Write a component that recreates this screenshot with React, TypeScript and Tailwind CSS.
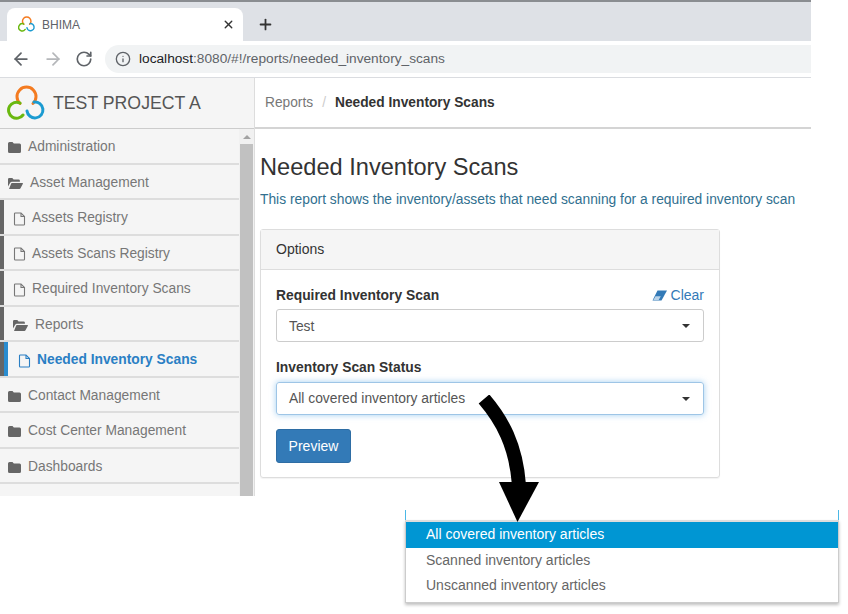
import React from 'react';
import { ArrowLeft, ArrowRight, Info, Plus, RotateCw, X } from 'lucide-react';

const FONT = "font-['Liberation_Sans',Arial,sans-serif]";

const Logo: React.FC<{ width: number; stroke: number }> = ({ width, stroke }) => (
  <svg width={width} viewBox="0 0 38 36" fill="none" className="shrink-0">
    <path d="M13 18.500 A9.500 9.500 0 1 1 26 18.500" stroke="#f47b20" strokeWidth={stroke} strokeLinecap="round" />
    <path d="M13 18 A8 8 0 1 0 16 30" stroke="#6ab80f" strokeWidth={stroke} strokeLinecap="round" />
    <path d="M20 26 A8 8 0 1 0 27 17" stroke="#1b9bd1" strokeWidth={stroke} strokeLinecap="round" />
  </svg>
);

const FolderClosed = () => (
  <svg width="13" height="11" viewBox="0 0 13 11" className="shrink-0">
    <path d="M1.500 0h3l1.300 1.600h5.700a1.500 1.500 0 0 1 1.500 1.500v6.400a1.500 1.500 0 0 1-1.500 1.500h-10A1.500 1.500 0 0 1 0 9.500v-8A1.500 1.500 0 0 1 1.500 0z" fill="#666" />
  </svg>
);

const FolderOpen = () => (
  <svg width="15" height="11" viewBox="0 0 15 11" className="shrink-0">
    <path d="M1.300 0h3l1.300 1.500h5a1.300 1.300 0 0 1 1.300 1.300v1H4a2 2 0 0 0-1.800 1L0 8.600V1.300A1.300 1.300 0 0 1 1.300 0z" fill="#666" />
    <path d="M3.800 5h10.700c.4 0 .6.400.4.700l-2.400 4.600a1.200 1.200 0 0 1-1 .7H1l2.200-5.500c.1-.300.300-.500.600-.500z" fill="#666" />
  </svg>
);

const PageIcon = () => (
  <svg width="13" height="14" viewBox="0 0 13 14" fill="none" stroke="currentColor" strokeWidth="1.100" className="shrink-0">
    <path d="M1.500 1.800c0-.5.300-.800.800-.800h5.700l3.500 3.500v7.700c0 .5-.3.800-.8.800H2.300c-.5 0-.8-.3-.8-.8z" />
    <path d="M8 1v3.500h3.500" />
  </svg>
);

const Eraser = () => (
  <svg width="15" height="11" viewBox="0 0 15 11" className="shrink-0">
    <path d="M5.500 0.500H15L9.500 10.500H0.500z" fill="#337ab7" />
    <path d="M1.300 10L3.500 6.200h5.300L6.700 10z" fill="#b9d3e9" />
  </svg>
);

const Caret = () => <span className="h-0 w-0 border-x-4 border-t-4 border-x-transparent border-t-[#333]" />;

const NavRow: React.FC<{ label: string; kind: 'closed' | 'open' }> = ({ label, kind }) => (
  <div className="flex h-[35.5px] items-center gap-[7px] border-b-2 border-[#ddd] pt-[4px] pl-[8px] text-[13.8px] text-[#777]">
    {kind === 'closed' ? <FolderClosed /> : <FolderOpen />}
    <span>{label}</span>
  </div>
);

const ChildRow: React.FC<{ label: string; active?: boolean; folder?: boolean }> = ({ label, active, folder }) => (
  <div className="flex h-[35.5px] border-b-2 border-[#ddd] text-[13.8px] text-[#777]">
    <span className="w-[4px] shrink-0 bg-[#666]" />
    {active && <span className="w-[4px] shrink-0 bg-[#2a8ccf]" />}
    <div
      className={`flex items-center pt-[4px] ${
        active ? 'gap-[6px] pl-[10px] font-bold text-[#2a7fc4]' : folder ? 'gap-[7px] pl-[9px]' : 'gap-[6px] pl-[9px]'
      }`}
    >
      {folder ? <FolderOpen /> : <PageIcon />}
      <span>{label}</span>
    </div>
  </div>
);

const Sidebar = () => (
  <aside className="flex h-[418px] w-[255px] shrink-0 flex-col border-r border-[#ddd] bg-[#f5f5f5]">
    <div className="flex h-[51px] shrink-0 items-center gap-[8px] border-b border-[#ccc] pl-[7px]">
      <Logo width={38} stroke={3} />
      <span className="text-[17.7px] text-[#555]">TEST PROJECT A</span>
    </div>
    <div className="flex min-h-0 flex-1">
      <nav className="w-[239px] overflow-hidden">
        <NavRow label="Administration" kind="closed" />
        <NavRow label="Asset Management" kind="open" />
        <ChildRow label="Assets Registry" />
        <ChildRow label="Assets Scans Registry" />
        <ChildRow label="Required Inventory Scans" />
        <ChildRow label="Reports" folder />
        <ChildRow label="Needed Inventory Scans" active />
        <NavRow label="Contact Management" kind="closed" />
        <NavRow label="Cost Center Management" kind="closed" />
        <NavRow label="Dashboards" kind="closed" />
      </nav>
      <div className="flex w-[15px] flex-col items-center bg-[#f1f1f1]">
        <span className="mt-[6px] mb-[5px] h-0 w-0 border-x-[4px] border-b-[4px] border-x-transparent border-b-[#a3a3a3]" />
        <span className="w-[13px] flex-1 bg-[#c1c1c1]" />
      </div>
    </div>
  </aside>
);

const SelectBox: React.FC<{ value: string; focused?: boolean }> = ({ value, focused }) => (
  <div
    className={`flex h-[33px] items-center justify-between rounded-[3px] border pr-[13px] pl-[12px] text-[13.85px] text-[#555] ${
      focused ? 'border-[#9ec5e6] shadow-[0_0_6px_rgba(102,175,233,0.6)]' : 'border-[#ccc] pt-[1px]'
    }`}
  >
    <span>{value}</span>
    <Caret />
  </div>
);

const Content = () => (
  <main className="min-w-0 flex-1 bg-white">
    <div className="flex h-[51px] items-center gap-[9px] border-b-2 border-[#d4d4d4] pt-[2px] pl-[10px] text-[13.75px]">
      <span className="text-[#777]">Reports</span>
      <span className="text-[#ccc]">/</span>
      <span className="font-bold text-[#333]">Needed Inventory Scans</span>
    </div>
    <div className="pl-[5px]">
      <h1 className="mt-[23px] text-[23.6px] leading-[30px] font-normal text-[#333]">Needed Inventory Scans</h1>
      <p className="mt-[7px] text-[13.82px] leading-[20px] text-[#31708f]">
        This report shows the inventory/assets that need scanning for a required inventory scan
      </p>
      <section className="mt-[20px] w-[460px] rounded-[3px] border border-[#ddd] shadow-[0_1px_1px_rgba(0,0,0,0.05)]">
        <div className="flex h-[40px] items-center border-b border-[#ddd] bg-[#f5f5f5] pl-[15px] text-[14px] text-[#333]">
          Options
        </div>
        <div className="px-[15px] pt-[15px] pb-[14px]">
          <div className="flex h-[20px] items-center justify-between text-[14px]">
            <label className="text-[13.85px] font-bold text-[#333]">Required Inventory Scan</label>
            <span className="flex items-center gap-[4px] text-[#337ab7]">
              <Eraser />
              Clear
            </span>
          </div>
          <div className="mt-[4px]">
            <SelectBox value="Test" />
          </div>
          <label className="mt-[15px] block text-[13.85px] leading-[20px] font-bold text-[#333]">
            Inventory Scan Status
          </label>
          <div className="mt-[5px]">
            <SelectBox value="All covered inventory articles" focused />
          </div>
          <button className="mt-[14px] h-[34px] w-[75px] rounded-[3px] border border-[#2e6da4] bg-[#337ab7] text-[14px] text-white">
            Preview
          </button>
        </div>
      </section>
    </div>
  </main>
);

const BrowserChrome = () => (
  <div className="w-[811px]">
    <div className="h-[2px] bg-[#8a8d91]" />
    <div className="flex h-[39px] items-end bg-[#dee1e6] pl-[7px]">
      <div className="flex h-[33px] w-[236px] items-center rounded-t-[8px] bg-white pr-[8px] pl-[11px]">
        <Logo width={17} stroke={3.2} />
        <span className="ml-[7px] flex-1 text-[12px] text-[#5f6368]">BHIMA</span>
        <X size={13} strokeWidth={2.5} className="text-[#333]" />
      </div>
      <Plus size={17} strokeWidth={2.5} className="mb-[8px] ml-[14px] text-[#333]" />
    </div>
    <div className="flex h-[37px] items-center border-b border-[#dadce0] bg-white pl-[11px]">
      <ArrowLeft size={20} strokeWidth={2.1} className="text-[#5f6368]" />
      <ArrowRight size={20} strokeWidth={2.1} className="ml-[12px] text-[#b5b7ba]" />
      <RotateCw size={18} strokeWidth={2.2} className="ml-[12px] text-[#5f6368]" />
      <div className="ml-[12px] flex h-[28px] flex-1 items-center rounded-l-full bg-[#f1f3f4] pl-[10px] text-[13.7px]">
        <Info size={16} strokeWidth={2} className="text-[#5f6368]" />
        <span className="ml-[8px] text-[#202124]">localhost</span>
        <span className="text-[#5f6368]">:8080/#!/reports/needed_inventory_scans</span>
      </div>
    </div>
  </div>
);

const Dropdown = () => (
  <div className="relative mt-[14px] ml-[405px] w-[434px]">
    <span className="absolute top-0 left-0 h-[10px] w-px bg-[#4cb8e6]" />
    <span className="absolute top-0 right-0 h-[10px] w-px bg-[#4cb8e6]" />
    <div className="pt-[10px]">
      <ul className="border border-t-2 border-[#ccc] border-t-[#ddd] bg-white pb-[3px] text-[14px] text-[#666] shadow-[0_2px_3px_rgba(0,0,0,0.25)]">
        <li className="flex h-[25.6px] items-center bg-[#0096d3] pl-[20px] text-white">All covered inventory articles</li>
        <li className="flex h-[25.6px] items-center pl-[20px]">Scanned inventory articles</li>
        <li className="flex h-[25.6px] items-center pl-[20px]">Unscanned inventory articles</li>
      </ul>
    </div>
  </div>
);

const Arrow = () => (
  <svg width="70" height="130" viewBox="0 0 70 130" className="absolute top-[395px] left-[470px]">
    <path d="M14 4 C32 25 46 50 49 90" fill="none" stroke="#000" strokeWidth="14" />
    <path d="M29 87 H69 L47.500 127z" fill="#000" />
  </svg>
);

export default function App() {
  return (
    <div className={`relative h-[614px] w-[848px] overflow-hidden bg-white ${FONT}`}>
      <BrowserChrome />
      <div className="flex w-[811px]">
        <Sidebar />
        <Content />
      </div>
      <Dropdown />
      <Arrow />
    </div>
  );
}
